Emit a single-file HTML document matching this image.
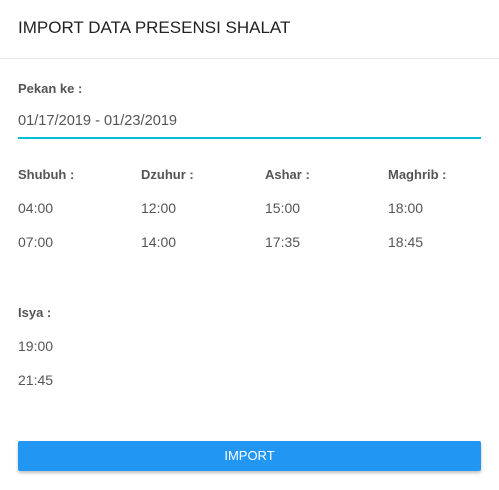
<!DOCTYPE html>
<html><head><style>
body{margin:0;width:499px;height:490px;background:#fff;font-family:"Liberation Sans",Arial,sans-serif;position:relative;overflow:hidden}
.a{position:absolute;white-space:nowrap;line-height:1}
.t{font-size:17px;color:#222;left:18px;top:19px}
.hr{position:absolute;left:0;top:58px;width:499px;height:1px;background:#e8e8e8}
.l{font-size:13px;font-weight:bold;color:#555}
.v{font-size:14px;color:#555}
.ul{position:absolute;left:18px;top:137px;width:463px;height:2px;background:#00bcd4}
.btn{position:absolute;left:18px;top:441px;width:463px;height:30px;background:#2196f3;border-radius:2px;box-shadow:0 2px 3px rgba(0,0,0,.25);color:#fff;font-size:13px;text-align:center;line-height:30px}
</style></head><body>
<div class="a t">IMPORT DATA PRESENSI SHALAT</div>
<div class="hr"></div>
<div class="a l" style="left:18px;top:82px">Pekan ke :</div>
<div class="a v" style="left:18px;top:114px;font-size:14.6px">01/17/2019 - 01/23/2019</div>
<div class="ul"></div>
<div class="a l" style="left:18px;top:168px">Shubuh :</div>
<div class="a l" style="left:141px;top:168px">Dzuhur :</div>
<div class="a l" style="left:265px;top:168px">Ashar :</div>
<div class="a l" style="left:388px;top:168px">Maghrib :</div>
<div class="a v" style="left:18px;top:201px">04:00</div>
<div class="a v" style="left:141px;top:201px">12:00</div>
<div class="a v" style="left:265px;top:201px">15:00</div>
<div class="a v" style="left:388px;top:201px">18:00</div>
<div class="a v" style="left:18px;top:235px">07:00</div>
<div class="a v" style="left:141px;top:235px">14:00</div>
<div class="a v" style="left:265px;top:235px">17:35</div>
<div class="a v" style="left:388px;top:235px">18:45</div>
<div class="a l" style="left:18px;top:306px">Isya :</div>
<div class="a v" style="left:18px;top:339px">19:00</div>
<div class="a v" style="left:18px;top:373px">21:45</div>
<div class="btn">IMPORT</div>
</body></html>
